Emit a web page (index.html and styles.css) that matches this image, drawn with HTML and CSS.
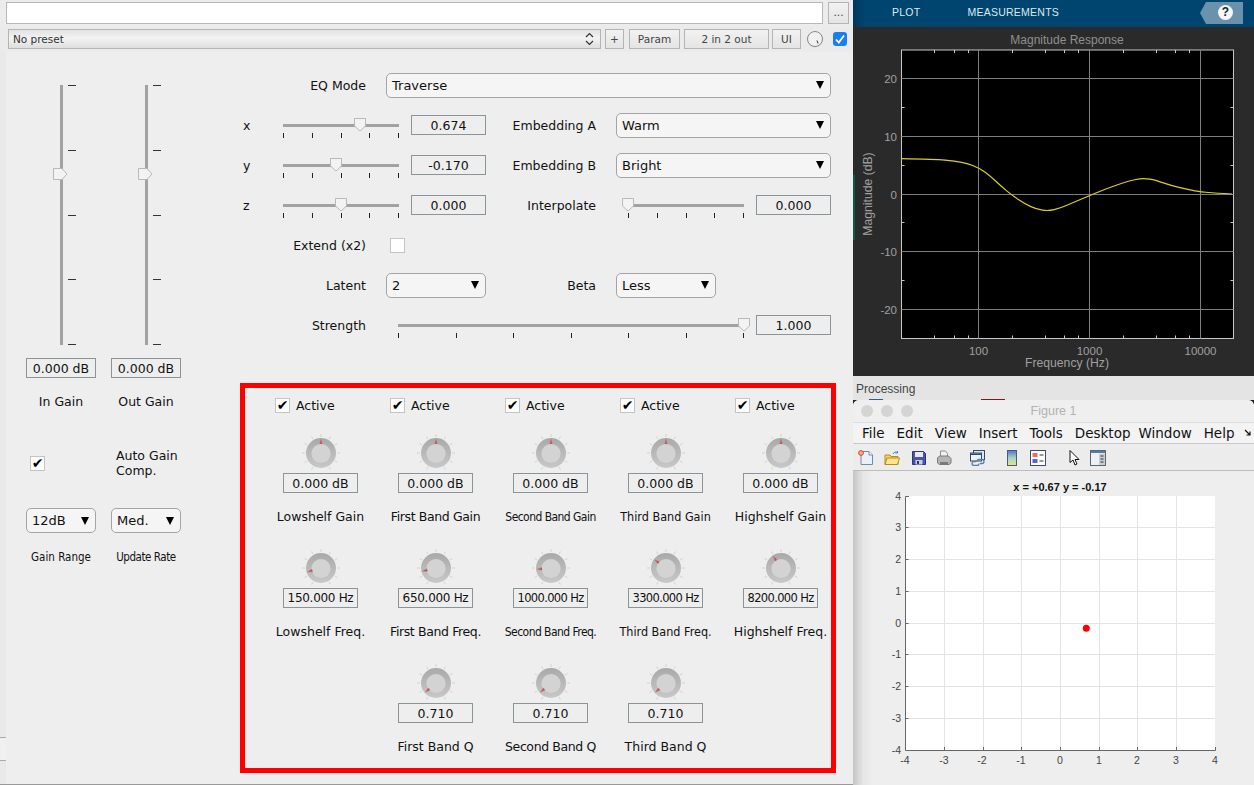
FILE: index.html
```html
<!DOCTYPE html>
<html lang="en">
  <head>
    <meta charset="UTF-8" />
    <title>Traverse EQ</title>
    <link rel="stylesheet" href="styles.css">
  </head>
  <body>
    <svg class="defs" width="0" height="0">
      <symbol id="knob-face" viewBox="-20 -20 40 40">
        <defs>
          <linearGradient id="knob-ring" x1="0" y1="0" x2="0" y2="1">
            <stop offset="0" stop-color="#a9a9a9" />
            <stop offset="1" stop-color="#c8c8c8" />
          </linearGradient>
        </defs>
        <path d="M0-16v-3M8-13.9l1.5-2.6M13.9-8l2.6-1.5M16 0h3M13.9 8l2.6 1.5M8 13.9l1.5 2.6M-8-13.9l-1.5-2.6M-13.9-8l-2.6-1.5M-16 0h-3M-13.9 8l-2.6 1.5M-8 13.9l-1.5 2.6" stroke="#d2d2d2" fill="none" />
        <circle r="15" fill="url(#knob-ring)" />
        <circle cy="0.5" r="9.6" fill="#d3d3d3" />
      </symbol>
      <symbol id="knob-mark" viewBox="-20 -20 40 40">
        <path d="M-2-9L0-15L2-9Z" fill="#a0a0a0" />
        <path d="M-.9-9L0-14L.9-9Z" fill="#f4303f" />
      </symbol>
    </svg>

    <div class="app">
      <!-- plugin window -->
      <div class="plugin">
        <div class="file-row">
          <div class="path-field"></div>
          <div class="btn btn-dots">...</div>
        </div>
        <div class="preset-row">
          <div class="preset-select">
            <span>No preset</span>
            <svg class="stepper" width="9" height="14" viewBox="0 0 9 14">
              <path d="M1 5l3.5-3.5L8 5M1 9l3.5 3.5L8 9" fill="none" stroke="#333" stroke-width="1.2" />
            </svg>
          </div>
          <div class="btn btn-plus">+</div>
          <div class="btn btn-param">Param</div>
          <div class="btn btn-io">2 in 2 out</div>
          <div class="btn btn-ui">UI</div>
          <svg class="mini-knob" width="18" height="18" viewBox="0 0 18 18">
            <circle cx="9" cy="9.6" r="7.8" fill="#cfcfcf" />
            <circle cx="9" cy="9" r="7.5" fill="#f1f1f1" stroke="#8a8a8a" />
            <path d="M11 10.5l1 3" stroke="#333" />
          </svg>
          <div class="bypass">
            <svg width="14" height="14" viewBox="0 0 14 14">
              <path d="M3 7.5l2.8 3L11 3.5" fill="none" stroke="#fff" stroke-width="1.8" />
            </svg>
          </div>
        </div>

        <div class="plugin-body">
          <!-- gain column -->
          <div class="gain-col">
            <div class="fader">
              <div class="fader-track"></div>
              <div class="fader-ticks"><i></i><i></i><i></i><i></i><i></i></div>
              <svg class="fader-thumb" width="15" height="12" viewBox="0 0 15 12"><path d="M.5.5H9L14 6L9 11.5H.5Z" /></svg>
            </div>
            <div class="fader">
              <div class="fader-track"></div>
              <div class="fader-ticks"><i></i><i></i><i></i><i></i><i></i></div>
              <svg class="fader-thumb" width="15" height="12" viewBox="0 0 15 12"><path d="M.5.5H9L14 6L9 11.5H.5Z" /></svg>
            </div>
            <div class="value gain-value">0.000 dB</div>
            <div class="value gain-value">0.000 dB</div>
            <div class="caption gain-caption">In Gain</div>
            <div class="caption gain-caption">Out Gain</div>
            <div class="auto-check"><div class="check">&#10004;</div></div>
            <div class="auto-label">Auto Gain<br />Comp.</div>
            <div class="dropdown small-drop"><span>12dB</span><b></b></div>
            <div class="dropdown small-drop"><span>Med.</span><b></b></div>
            <div class="caption gain-caption small-caption">Gain Range</div>
            <div class="caption gain-caption small-caption caption-update">Update Rate</div>
          </div>

          <div class="main-col">
            <div class="row">
              <div class="label label-main">EQ Mode</div>
              <div class="dropdown drop-mode"><span>Traverse</span><b></b></div>
            </div>
            <div class="row">
              <div class="axis">x</div>
              <div class="slider">
                <div class="slider-track"></div>
                <div class="slider-ticks"><i></i><i></i><i></i><i></i><i></i></div>
                <svg class="slider-thumb" style="left: 66.4%" width="12" height="14" viewBox="0 0 12 14"><path d="M.5.5H11.5V8L6 13L.5 8Z" /></svg>
              </div>
              <div class="value">0.674</div>
              <div class="label label-side">Embedding A</div>
              <div class="dropdown drop-embed"><span>Warm</span><b></b></div>
            </div>
            <div class="row">
              <div class="axis">y</div>
              <div class="slider">
                <div class="slider-track"></div>
                <div class="slider-ticks"><i></i><i></i><i></i><i></i><i></i></div>
                <svg class="slider-thumb" style="left: 45.7%" width="12" height="14" viewBox="0 0 12 14"><path d="M.5.5H11.5V8L6 13L.5 8Z" /></svg>
              </div>
              <div class="value">-0.170</div>
              <div class="label label-side">Embedding B</div>
              <div class="dropdown drop-embed"><span>Bright</span><b></b></div>
            </div>
            <div class="row">
              <div class="axis">z</div>
              <div class="slider">
                <div class="slider-track"></div>
                <div class="slider-ticks"><i></i><i></i><i></i><i></i><i></i></div>
                <svg class="slider-thumb" style="left: 50%" width="12" height="14" viewBox="0 0 12 14"><path d="M.5.5H11.5V8L6 13L.5 8Z" /></svg>
              </div>
              <div class="value">0.000</div>
              <div class="label label-side">Interpolate</div>
              <div class="slider slider-interp">
                <div class="slider-track"></div>
                <div class="slider-ticks"><i></i><i></i><i></i><i></i><i></i></div>
                <svg class="slider-thumb" style="left: 0" width="12" height="14" viewBox="0 0 12 14"><path d="M.5.5H11.5V8L6 13L.5 8Z" /></svg>
              </div>
              <div class="value">0.000</div>
            </div>
            <div class="row">
              <div class="label label-main">Extend (x2)</div>
              <div class="check check-extend"></div>
            </div>
            <div class="row">
              <div class="label label-main">Latent</div>
              <div class="dropdown drop-latent"><span>2</span><b></b></div>
              <div class="label label-side">Beta</div>
              <div class="dropdown drop-beta"><span>Less</span><b></b></div>
            </div>
            <div class="row">
              <div class="label label-main">Strength</div>
              <div class="slider slider-strength">
                <div class="slider-track"></div>
                <div class="slider-ticks"><i></i><i></i><i></i><i></i><i></i><i></i><i></i></div>
                <svg class="slider-thumb" style="left: 100%" width="12" height="14" viewBox="0 0 12 14"><path d="M.5.5H11.5V8L6 13L.5 8Z" /></svg>
              </div>
              <div class="value">1.000</div>
            </div>

            <!-- bands -->
            <div class="bands">
              <div class="active"><div class="check">&#10004;</div><span>Active</span></div>
              <div class="active"><div class="check">&#10004;</div><span>Active</span></div>
              <div class="active"><div class="check">&#10004;</div><span>Active</span></div>
              <div class="active"><div class="check">&#10004;</div><span>Active</span></div>
              <div class="active"><div class="check">&#10004;</div><span>Active</span></div>

              <div class="band">
                <svg class="knob" viewBox="-20 -20 40 40"><use href="#knob-face" x="-20" y="-20" width="40" height="40" /><use href="#knob-mark" x="-20" y="-20" width="40" height="40" /></svg>
                <div class="value">0.000 dB</div>
                <div class="caption">Lowshelf Gain</div>
              </div>
              <div class="band">
                <svg class="knob" viewBox="-20 -20 40 40"><use href="#knob-face" x="-20" y="-20" width="40" height="40" /><use href="#knob-mark" x="-20" y="-20" width="40" height="40" /></svg>
                <div class="value">0.000 dB</div>
                <div class="caption caption-snug">First Band Gain</div>
              </div>
              <div class="band">
                <svg class="knob" viewBox="-20 -20 40 40"><use href="#knob-face" x="-20" y="-20" width="40" height="40" /><use href="#knob-mark" x="-20" y="-20" width="40" height="40" /></svg>
                <div class="value">0.000 dB</div>
                <div class="caption caption-tight">Second Band Gain</div>
              </div>
              <div class="band">
                <svg class="knob" viewBox="-20 -20 40 40"><use href="#knob-face" x="-20" y="-20" width="40" height="40" /><use href="#knob-mark" x="-20" y="-20" width="40" height="40" /></svg>
                <div class="value">0.000 dB</div>
                <div class="caption caption-cond">Third Band Gain</div>
              </div>
              <div class="band">
                <svg class="knob" viewBox="-20 -20 40 40"><use href="#knob-face" x="-20" y="-20" width="40" height="40" /><use href="#knob-mark" x="-20" y="-20" width="40" height="40" /></svg>
                <div class="value">0.000 dB</div>
                <div class="caption">Highshelf Gain</div>
              </div>

              <div class="band">
                <svg class="knob" viewBox="-20 -20 40 40"><use href="#knob-face" x="-20" y="-20" width="40" height="40" /><g transform="rotate(-106)"><use href="#knob-mark" x="-20" y="-20" width="40" height="40" /></g></svg>
                <div class="value value-hz">150.000 Hz</div>
                <div class="caption">Lowshelf Freq.</div>
              </div>
              <div class="band">
                <svg class="knob" viewBox="-20 -20 40 40"><use href="#knob-face" x="-20" y="-20" width="40" height="40" /><g transform="rotate(-103)"><use href="#knob-mark" x="-20" y="-20" width="40" height="40" /></g></svg>
                <div class="value value-hz">650.000 Hz</div>
                <div class="caption caption-snug">First Band Freq.</div>
              </div>
              <div class="band">
                <svg class="knob" viewBox="-20 -20 40 40"><use href="#knob-face" x="-20" y="-20" width="40" height="40" /><g transform="rotate(-95)"><use href="#knob-mark" x="-20" y="-20" width="40" height="40" /></g></svg>
                <div class="value value-tight">1000.000 Hz</div>
                <div class="caption caption-tight">Second Band Freq.</div>
              </div>
              <div class="band">
                <svg class="knob" viewBox="-20 -20 40 40"><use href="#knob-face" x="-20" y="-20" width="40" height="40" /><g transform="rotate(-54)"><use href="#knob-mark" x="-20" y="-20" width="40" height="40" /></g></svg>
                <div class="value value-tight">3300.000 Hz</div>
                <div class="caption caption-cond">Third Band Freq.</div>
              </div>
              <div class="band">
                <svg class="knob" viewBox="-20 -20 40 40"><use href="#knob-face" x="-20" y="-20" width="40" height="40" /><g transform="rotate(-33)"><use href="#knob-mark" x="-20" y="-20" width="40" height="40" /></g></svg>
                <div class="value value-tight">8200.000 Hz</div>
                <div class="caption">Highshelf Freq.</div>
              </div>

              <div class="band band-q">
                <svg class="knob" viewBox="-20 -20 40 40"><use href="#knob-face" x="-20" y="-20" width="40" height="40" /><g transform="rotate(-131)"><use href="#knob-mark" x="-20" y="-20" width="40" height="40" /></g></svg>
                <div class="value">0.710</div>
                <div class="caption">First Band Q</div>
              </div>
              <div class="band">
                <svg class="knob" viewBox="-20 -20 40 40"><use href="#knob-face" x="-20" y="-20" width="40" height="40" /><g transform="rotate(-131)"><use href="#knob-mark" x="-20" y="-20" width="40" height="40" /></g></svg>
                <div class="value">0.710</div>
                <div class="caption caption-snug">Second Band Q</div>
              </div>
              <div class="band">
                <svg class="knob" viewBox="-20 -20 40 40"><use href="#knob-face" x="-20" y="-20" width="40" height="40" /><g transform="rotate(-131)"><use href="#knob-mark" x="-20" y="-20" width="40" height="40" /></g></svg>
                <div class="value">0.710</div>
                <div class="caption">Third Band Q</div>
              </div>
            </div>
          </div>
        </div>
        <div class="edge-tab"></div>
      </div>

      <!-- right side -->
      <div class="side">
        <div class="scope-bar">
          <span class="scope-tab-plot">PLOT</span>
          <span class="scope-tab-meas">MEASUREMENTS</span>
          <div class="help-tag"><span class="help-dot">?</span></div>
        </div>
        <svg class="scope" width="401" height="349" viewBox="853 27 401 349">
          <rect x="901.5" y="50" width="332" height="288.5" fill="#000" stroke="#c8c8c8" />
          <path class="scope-grid" d="M978.5 50V338.5M1089.5 50V338.5M1200.5 50V338.5M901.5 78.5H1233.5M901.5 136.5H1233.5M901.5 194.5H1233.5M901.5 251.5H1233.5M901.5 309.5H1233.5" />
          <path class="scope-ticks" d="M934.5 50v3M954.5 50v3M968.5 50v3M1012.5 50v3M1045.5 50v3M1064.5 50v3M1078.5 50v3M1123.5 50v3M1156.5 50v3M1175.5 50v3M1189.5 50v3M934.5 338.5v-3M954.5 338.5v-3M968.5 338.5v-3M1012.5 338.5v-3M1045.5 338.5v-3M1064.5 338.5v-3M1078.5 338.5v-3M1123.5 338.5v-3M1156.5 338.5v-3M1175.5 338.5v-3M1189.5 338.5v-3M901.5 107.5h3M901.5 165.5h3M901.5 222.5h3M901.5 280.5h3M1233.5 107.5h-3M1233.5 165.5h-3M1233.5 222.5h-3M1233.5 280.5h-3" />
          <path class="scope-curve" d="M901.3 158.7Q935 159.3 945 160.15Q955 161 961.65 162.35Q968.3 163.7 973.3 165.7Q978.3 167.7 983.3 171Q988.3 174.3 995 180.5Q1001.7 186.7 1006.7 190.85Q1011.7 195 1018.35 199.5Q1025 204 1030.85 206.65Q1036.7 209.3 1042.5 210.15Q1048.3 211 1054.15 209.65Q1060 208.3 1067.5 205Q1075 201.7 1082.15 198.7Q1089.3 195.7 1097.15 192.5Q1105 189.3 1113.35 186.3Q1121.7 183.3 1128.35 181.3Q1135 179.3 1140 178.8Q1145 178.3 1150 179.15Q1155 180 1163.35 182.85Q1171.7 185.7 1180 187.7Q1188.3 189.7 1195 190.85Q1201.7 192 1208.35 192.5Q1215 193 1232 194" />
          <text class="scope-title" x="1067" y="44" text-anchor="middle">Magnitude Response</text>
          <g class="scope-labels" text-anchor="end">
            <text x="897" y="82.5">20</text>
            <text x="897" y="140.5">10</text>
            <text x="897" y="198.5">0</text>
            <text x="897" y="255.5">-10</text>
            <text x="897" y="313.5">-20</text>
          </g>
          <g class="scope-labels" text-anchor="middle">
            <text x="978.5" y="355">100</text>
            <text x="1089.5" y="355">1000</text>
            <text x="1200.5" y="355">10000</text>
            <text class="scope-axis-name" x="1067" y="367">Frequency (Hz)</text>
            <text class="scope-axis-name" transform="translate(872 194) rotate(-90)">Magnitude (dB)</text>
          </g>
        </svg>
        <div class="green-mark"></div>

        <div class="processing">Processing</div>

        <div class="figure">
          <div class="figure-title">
            <div class="lights"><i></i><i></i><i></i></div>
            <span>Figure 1</span>
          </div>
          <div class="menu">
            <span>File</span>
            <span>Edit</span>
            <span>View</span>
            <span>Insert</span>
            <span>Tools</span>
            <span class="menu-desktop">Desktop</span>
            <span>Window</span>
            <span>Help</span>
            <svg class="menu-more" width="8" height="8" viewBox="0 0 8 8"><path d="M1 1l5 5M6 2.5V6H2.5" fill="none" stroke="#111" stroke-width="1.2" /></svg>
          </div>
          <div class="tools">
            <svg width="16" height="16" viewBox="0 0 16 16"><path d="M3 1.5h8l3.5 3.5v9.5H3Z" fill="#e8f0f8" stroke="#6d8cac" /><path d="M11 1.5V5h3.5" fill="#fff" stroke="#6d8cac" /><circle cx="3" cy="3" r="2.4" fill="#f6a98c" stroke="#d9472b" /></svg>
            <svg class="tool-gap-10" width="16" height="16" viewBox="0 0 16 16"><path d="M1 5h5l1 1.5h7V14.5H1Z" fill="#f6d365" stroke="#b58a1e" /><path d="M1 14.5L3 8h12.5l-2 6.5Z" fill="#fce58d" stroke="#b58a1e" /><path d="M9 4c1-2 3-2.500 4.500-1.500M13.500 1v2h-2" fill="none" stroke="#5a7fa5" /></svg>
            <svg class="tool-gap-11" width="16" height="16" viewBox="0 0 16 16"><path d="M1.500 1.500h11l2 2v11h-13Z" fill="#4a55a8" stroke="#2e3570" /><rect x="4" y="2" width="8" height="5" fill="#e8e8f4" /><rect x="4.500" y="10" width="7" height="4.500" fill="#c8cce8" /><rect x="6" y="11" width="2" height="3" fill="#2e3570" /></svg>
            <svg class="tool-gap-9" width="16" height="16" viewBox="0 0 16 16"><path d="M4.500 1h5l2 2.500V7h-7Z" fill="#f1f1f1" stroke="#8f8f8f" /><path d="M1.500 8l2-2h9l2.500 2.500V13l-2 1.500H3.500l-2-1.500Z" fill="#b5b5b5" stroke="#7a7a7a" /><path d="M4 13h8" stroke="#666" stroke-width="1.5" /></svg>
            <svg class="tool-gap-18" width="16" height="16" viewBox="0 0 16 16"><rect x="3.500" y=".5" width="11" height="9" fill="#dfe8f2" stroke="#2e4a6d" /><rect x=".5" y="3" width="11" height="8" fill="#eef3f8" stroke="#2e4a6d" /><rect x="1" y="3.500" width="10" height="1.500" fill="#2e4a6d" /><path d="M6 11.500h-2a2 2 0 0 0 0 4h3a2 2 0 0 0 2-2M10 13.500h2a2 2 0 0 0 0-4h-3a2 2 0 0 0-2 2" fill="none" stroke="#5b7ea3" stroke-width="1.300" /></svg>
            <svg class="tool-gap-18" width="16" height="16" viewBox="0 0 16 16"><defs><linearGradient id="bar-grad" x1="0" y1="0" x2="0" y2="1"><stop offset="0" stop-color="#5d6fd0" /><stop offset=".5" stop-color="#9fd8c0" /><stop offset="1" stop-color="#f4dc8a" /></linearGradient></defs><rect x="3.500" y=".5" width="9" height="15" fill="url(#bar-grad)" stroke="#4a5a7c" /></svg>
            <svg class="tool-gap-10" width="16" height="16" viewBox="0 0 16 16"><rect x=".5" y=".5" width="15" height="15" fill="#fff" stroke="#3a4a78" /><rect x="2.500" y="3" width="5" height="4" fill="#e66a6a" /><rect x="2.500" y="9" width="5" height="4" fill="#5a64d8" /><path d="M9.500 5h4M9.500 11h4" stroke="#333" /></svg>
            <svg class="tool-gap-20" width="16" height="16" viewBox="0 0 16 16"><path d="M4 .5V12.500l3-2.500 2 5 2-1-2-4.500h4Z" fill="#fff" stroke="#111" /></svg>
            <svg class="tool-gap-8" width="16" height="16" viewBox="0 0 16 16"><rect x=".5" y=".5" width="15" height="15" fill="#eef1f4" stroke="#5c6670" /><rect x="1" y="1" width="14" height="2" fill="#4f7ea8" /><rect x="9" y="3.500" width="6" height="11.500" fill="#c9cdd1" /><path d="M10.500 6h3M10.500 9h3M10.500 12h3" stroke="#333" /></svg>
          </div>
          <svg class="axes" width="401" height="314" viewBox="853 471 401 314">
            <text class="axes-title" x="1060" y="20" transform="translate(0 471)" text-anchor="middle">x = +0.67 y = -0.17</text>
            <rect x="905.500" y="496" width="309.500" height="254" fill="#fff" />
            <path class="axes-grid" d="M944.500 496V750M983.500 496V750M1021.500 496V750M1060.500 496V750M1099.500 496V750M1137.500 496V750M1176.500 496V750M905.500 527.500H1215M905.500 559.500H1215M905.500 591.500H1215M905.500 623.500H1215M905.500 654.500H1215M905.500 686.500H1215M905.500 718.500H1215" />
            <path class="axes-line" d="M909 496.500H905.500V750.500H1215.500V747M905.500 527.500h3M905.500 559.500h3M905.500 591.500h3M905.500 623.500h3M905.500 654.500h3M905.500 686.500h3M905.500 718.500h3M944.500 750v-3M983.500 750v-3M1021.500 750v-3M1060.500 750v-3M1099.500 750v-3M1137.500 750v-3M1176.500 750v-3" />
            <circle cx="1086.300" cy="628.300" r="3.500" fill="#f00" />
            <g class="axes-labels" text-anchor="end">
              <text x="901" y="500">4</text>
              <text x="901" y="531">3</text>
              <text x="901" y="563">2</text>
              <text x="901" y="595">1</text>
              <text x="901" y="627">0</text>
              <text x="901" y="658">-1</text>
              <text x="901" y="690">-2</text>
              <text x="901" y="722">-3</text>
              <text x="901" y="754">-4</text>
            </g>
            <g class="axes-labels" text-anchor="middle">
              <text x="905" y="764">-4</text>
              <text x="944" y="764">-3</text>
              <text x="982" y="764">-2</text>
              <text x="1021" y="764">-1</text>
              <text x="1060" y="764">0</text>
              <text x="1099" y="764">1</text>
              <text x="1137" y="764">2</text>
              <text x="1176" y="764">3</text>
              <text x="1215" y="764">4</text>
            </g>
          </svg>
        </div>
      </div>
    </div>
  </body>
</html>
```

FILE: styles.css
```css
* {
  box-sizing: border-box;
  padding: 0;
  margin: 0;
}

body {
  font-family: "DejaVu Sans", sans-serif;
  font-size: 12.5px;
  color: #111;
  background: #222;
  width: 1254px;
  height: 785px;
  overflow: hidden;
}

.defs {
  position: absolute;
}

.app {
  display: flex;
  height: 785px;
}

/* plugin */

.plugin {
  position: relative;
  width: 853px;
  height: 785px;
  background: #e9e9e9;
  border-bottom: 1px solid #999;
}

.file-row {
  display: flex;
  height: 26px;
  padding: 2px 4px 2px 6px;
  gap: 5px;
  background: #ececec;
}

.path-field {
  flex: 1;
  background: #fff;
  border: 1px solid #b8b8b8;
}

.btn {
  display: flex;
  align-items: center;
  justify-content: center;
  border: 1px solid #b4b4b4;
  background: linear-gradient(#f2f2f2, #e4e4e4);
  font-size: 10.5px;
  color: #444;
}

.btn-dots {
  width: 21px;
  padding-bottom: 2px;
}

.preset-row {
  display: flex;
  align-items: flex-start;
  height: 26px;
  padding: 3px 0 0 8px;
  background: #ebebeb;
}

.preset-select {
  display: flex;
  align-items: center;
  justify-content: space-between;
  width: 593px;
  height: 20px;
  padding: 0 6px 0 4px;
  border: 1px solid #b4b4b4;
  background: linear-gradient(#e2e2e2, #f3f3f3 45%, #dedede);
  font-size: 10.5px;
  color: #333;
}

.btn-plus {
  width: 19px;
  height: 20px;
  margin-left: 4px;
}

.btn-param {
  width: 51px;
  height: 20px;
  margin-left: 5px;
}

.btn-io {
  width: 85px;
  height: 20px;
  margin-left: 4px;
}

.btn-ui {
  width: 29px;
  height: 20px;
  margin-left: 3px;
}

.mini-knob {
  margin: 1px 0 0 5px;
}

.bypass {
  display: flex;
  align-items: center;
  justify-content: center;
  width: 14px;
  height: 14px;
  margin: 3px 0 0 9px;
  border-radius: 3px;
  background: #1a7ef2;
}

.plugin-body {
  display: flex;
  height: 732px;
  margin-left: 6px;
  background: #eee;
}

.edge-tab {
  position: absolute;
  left: 0;
  top: 737px;
  width: 6px;
  height: 24px;
  background: #f0f0f0;
  border-top: 1px solid #aaa;
  border-bottom: 1px solid #aaa;
}

/* left column */

.gain-col {
  display: grid;
  grid-template-columns: 70px 70px;
  grid-auto-rows: min-content;
  column-gap: 15px;
  width: 234px;
  padding: 28px 0 0 20px;
}

.fader {
  position: relative;
  display: flex;
  gap: 5px;
  height: 270px;
  padding: 5px 0 5px 34px;
}

.fader-track {
  width: 3px;
  background: #a2a2a2;
}

.fader-ticks {
  display: flex;
  flex-direction: column;
  justify-content: space-between;
}

.fader-ticks i {
  display: block;
  width: 8px;
  height: 1px;
  background: #333;
}

.fader-thumb {
  position: absolute;
  left: 27px;
  top: 88px;
}

.fader-thumb path,
.slider-thumb path {
  fill: #f3f3f3;
  stroke: #b9b9b9;
}

.value {
  display: flex;
  align-items: center;
  justify-content: center;
  width: 75px;
  height: 20px;
  border: 1px solid #8b9599;
  white-space: nowrap;
}

.value-hz {
  font-size: 12px;
  letter-spacing: -0.3px;
}

.value-tight {
  font-size: 11.5px;
  letter-spacing: -0.65px;
}

.gain-value {
  width: 70px;
  margin-top: 8px;
}

.caption {
  height: 18px;
  line-height: 18px;
  text-align: center;
  white-space: nowrap;
}

.caption-snug {
  letter-spacing: -0.38px;
}

.caption-cond {
  font-family: "DejaVu Sans Condensed", "DejaVu Sans", sans-serif;
}

.caption-tight {
  font-family: "DejaVu Sans Condensed", "DejaVu Sans", sans-serif;
  font-size: 12px;
  letter-spacing: -0.55px;
}

.gain-caption {
  margin-top: 15px;
}

.small-caption {
  font-family: "DejaVu Sans Condensed", "DejaVu Sans", sans-serif;
  font-size: 11.5px;
}

.caption-update {
  letter-spacing: -0.45px;
}

.auto-check {
  display: flex;
  align-items: center;
  height: 30px;
  margin-top: 37px;
  padding-left: 4px;
}

.auto-label {
  margin: 37px 0 0 5px;
  line-height: 15px;
  white-space: nowrap;
}

.check {
  display: flex;
  align-items: center;
  justify-content: center;
  width: 15px;
  height: 15px;
  border: 1px solid #c4c4c4;
  background: #fff;
  font-size: 14px;
  line-height: 1;
  color: #000;
}

.dropdown {
  display: flex;
  align-items: center;
  justify-content: space-between;
  height: 25px;
  padding: 0 6px 0 5px;
  border: 1px solid #a4a4a4;
  border-radius: 5px;
  background: #f5f5f5;
  font-size: 13px;
}

.dropdown b {
  width: 0;
  height: 0;
  border-left: 4.5px solid transparent;
  border-right: 4.5px solid transparent;
  border-top: 8px solid #000;
}

.small-drop {
  margin-top: 30px;
}

/* main column */

.main-col {
  width: 596px;
  padding-top: 13px;
}

.row {
  display: flex;
  align-items: center;
  height: 40px;
}

.label {
  white-space: nowrap;
  text-align: right;
}

.label-main {
  width: 126px;
  margin-right: 20px;
}

.label-side {
  width: 110px;
  margin-right: 20px;
}

.axis {
  width: 43px;
  padding-left: 3px;
}

.drop-mode {
  width: 445px;
}

.drop-embed {
  width: 215px;
}

.drop-latent,
.drop-beta {
  width: 100px;
}

.check-extend {
  margin-left: 4px;
}

.slider {
  position: relative;
  width: 116px;
  height: 22px;
  margin: 2px 12px 0 0;
}

.slider-track {
  height: 3px;
  margin-top: 9px;
  background: #a2a2a2;
}

.slider-ticks {
  display: flex;
  justify-content: space-between;
  margin-top: 6px;
}

.slider-ticks i {
  display: block;
  width: 1px;
  height: 5px;
  background: #222;
}

.slider-thumb {
  position: absolute;
  top: 3px;
  transform: translateX(-50%);
}

.slider-interp {
  margin-left: 12px;
}

.slider-strength {
  width: 346px;
  margin-left: 12px;
}

/* band panel */

.bands {
  display: grid;
  grid-template-columns: repeat(5, 115px);
  grid-auto-rows: min-content;
  row-gap: 22px;
  width: 596px;
  height: 390px;
  margin-top: 38px;
  padding-left: 18px;
  border: 5px solid #f00;
}

.active {
  display: flex;
  align-items: center;
  gap: 6px;
  height: 34px;
  margin-bottom: -11px;
  padding-left: 12px;
}

.band {
  display: flex;
  flex-direction: column;
  align-items: center;
}

.band-q {
  grid-column-start: 2;
}

.knob {
  display: block;
  width: 40px;
  height: 40px;
}

.band .caption {
  margin-top: 15px;
}

/* right side */

.side {
  position: relative;
  width: 401px;
  border-left: 2px solid #222;
}

.scope-bar {
  position: relative;
  display: flex;
  align-items: center;
  height: 27px;
  margin-left: -2px;
  padding: 0 0 3px 39px;
  background: linear-gradient(90deg, #00375c, #004570 3%);
  font-family: "Liberation Sans", sans-serif;
  font-size: 10.5px;
  letter-spacing: 0.25px;
  color: #dfe8ee;
}

.scope-tab-meas {
  margin-left: 47px;
}

.help-tag {
  position: absolute;
  left: 347px;
  top: 2px;
  width: 43px;
  height: 22px;
  background: #6a92ad;
  clip-path: polygon(6px 0, 100% 0, 100% 100%, 6px 100%, 0 50%);
}

.help-dot {
  position: absolute;
  left: 18px;
  top: 3px;
  width: 15px;
  height: 15px;
  border-radius: 50%;
  background: #f4f6f8;
  color: #222;
  font-size: 12px;
  font-weight: bold;
  line-height: 15px;
  letter-spacing: 0;
  text-align: center;
}

.scope {
  display: block;
  margin-left: -2px;
  background: #2a2a2a;
}

.green-mark {
  position: absolute;
  left: -2px;
  top: 175px;
  width: 2px;
  height: 65px;
  background: #0b5a45;
}

.scope-grid {
  stroke: #7e7e7e;
  fill: none;
}

.scope-ticks {
  stroke: #c8c8c8;
  fill: none;
}

.scope-curve {
  fill: none;
  stroke: #d6cf2e;
  stroke-width: 1.2;
}

.scope-title {
  font-family: "Liberation Sans", sans-serif;
  font-size: 12px;
  fill: #8f8f8f;
}

.scope-labels {
  font-family: "Liberation Sans", sans-serif;
  font-size: 11.5px;
  fill: #a0a0a0;
}

.scope-axis-name {
  font-size: 12.2px;
}

.processing {
  position: relative;
  height: 24px;
  margin-left: -2px;
  padding: 6px 0 0 3px;
  background: #e4e4e4;
  font-family: "Liberation Sans", sans-serif;
  font-size: 12px;
  color: #444;
}

.processing::before,
.processing::after {
  content: "";
  position: absolute;
  bottom: 0;
  height: 1px;
}

.processing::before {
  left: 16px;
  width: 14px;
  background: #2d5c8a;
}

.processing::after {
  left: 128px;
  width: 24px;
  background: #7a1b1b;
}

.figure {
  height: 385px;
  margin-left: -2px;
  border-radius: 6px 6px 0 0;
  background: #eee;
}

.figure-title {
  position: relative;
  height: 22px;
  border-radius: 6px 6px 0 0;
  background: #efefef;
  font-family: "Liberation Sans", sans-serif;
  font-size: 12.5px;
  line-height: 23px;
  text-align: center;
  color: #b2b2b2;
}

.lights {
  position: absolute;
  left: 8px;
  top: 5px;
  display: flex;
  gap: 8px;
}

.lights i {
  display: block;
  width: 12px;
  height: 12px;
  border-radius: 50%;
  background: #d4d4d4;
}

.menu {
  display: flex;
  align-items: center;
  gap: 12px;
  height: 22px;
  padding-left: 9px;
  background: #f3f3f3;
  border-top: 1px solid #ddd;
  border-bottom: 1px solid #c8c8c8;
  font-size: 13.5px;
  white-space: nowrap;
}

.menu-desktop {
  margin-right: -4px;
}

.menu-more {
  margin-left: -3px;
}

.tools {
  display: flex;
  align-items: center;
  height: 27px;
  padding: 1px 0 0 5px;
  background: #ececec;
  border-bottom: 1px solid #bdbdbd;
}

.tool-gap-8 {
  margin-left: 8px;
}

.tool-gap-9 {
  margin-left: 9px;
}

.tool-gap-10 {
  margin-left: 10px;
}

.tool-gap-11 {
  margin-left: 11px;
}

.tool-gap-18 {
  margin-left: 18px;
}

.tool-gap-20 {
  margin-left: 20px;
}

.axes {
  display: block;
  background: linear-gradient(90deg, #c4c4c4, #e6e6e6 10px, #eee 20px);
}

.axes-title {
  font-family: "Liberation Sans", sans-serif;
  font-size: 11px;
  font-weight: bold;
  fill: #111;
}

.axes-grid {
  stroke: #e4e4e4;
  fill: none;
}

.axes-line {
  stroke: #666;
  fill: none;
}

.axes-labels {
  font-family: "Liberation Sans", sans-serif;
  font-size: 10.5px;
  fill: #444;
}
```
